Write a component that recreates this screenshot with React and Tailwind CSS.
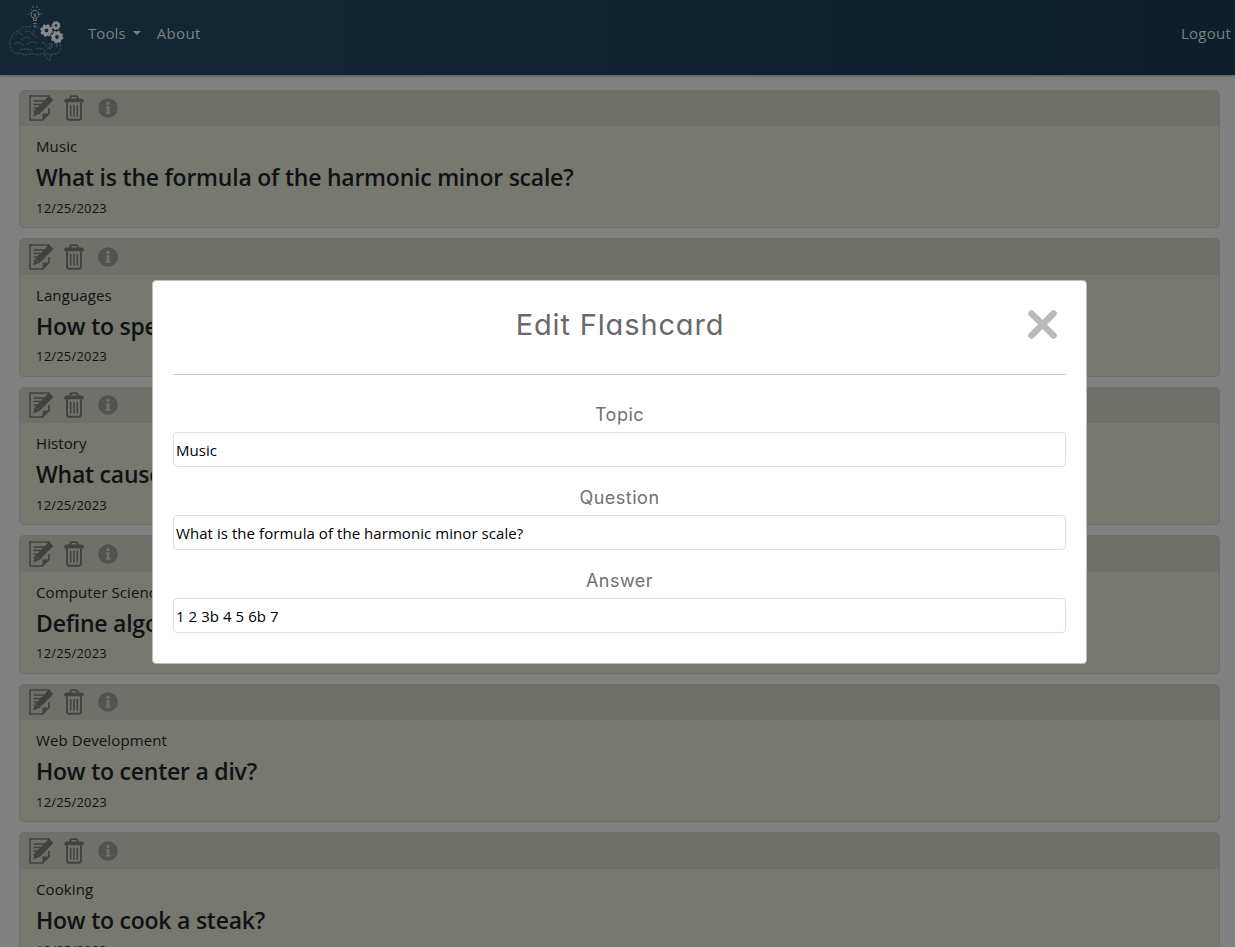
import React from "react";

const cards = [
  ["Music", "What is the formula of the harmonic minor scale?"],
  ["Languages", "How to speak a new language?"],
  ["History", "What caused World War I?"],
  ["Computer Science", "Define algorithm"],
  ["Web Development", "How to center a div?"],
  ["Cooking", "How to cook a steak?"],
];

const fields = [
  ["Topic", "Music"],
  ["Question", "What is the formula of the harmonic minor scale?"],
  ["Answer", "1 2 3b 4 5 6b 7"],
];

function Gear({ x, y, r }) {
  return (
    <g transform={`translate(${x} ${y})`} stroke="currentColor" fill="none">
      <circle r={r * 0.58} strokeWidth={r * 0.56} />
      <circle r={r * 0.88} strokeWidth={r * 0.25} strokeDasharray={`${r * 0.36} ${r * 0.331}`} />
    </g>
  );
}

function Logo() {
  return (
    <svg className="h-[66px] w-[72px] shrink-0 text-[#85898c]" viewBox="0 0 72 66" fill="none" stroke="currentColor">
      <g strokeWidth=".9" strokeLinecap="round" stroke="#737c82">
        <circle cx="35" cy="14.300" r="4" />
        <path d="M33.500 18.500v2h3v-2M34 14l1 3 1-3M28.500 14h.5M41 14h.5M30.500 9l.7.700M39.500 9l-.7.700M33 6.500v1M37 6.500v1" />
      </g>
      <path d="M33.500 23.500h3M35 25v3" strokeWidth="1" stroke="#68757e" />
      <g stroke="#435560" strokeWidth=".8" strokeDasharray="3 .8">
        <path d="M39 28c-4-3-8-2-10-1-5-1-9 1-10 4-5 0-7 4-7 7-3 3-3 7-1 10 0 4 5 6 9 5 4 3 9 2 12 0 3 3 8 2 11 0l5 1c5 1 11 0 12-4 2-5-1-8-4-9" />
        <path d="M16 34c3-2 6-1 7 2M21 40c4-3 7-4 10-1M14 44c4-3 8-1 9 2M27 45c3-4 8-4 11-1M25 32c4-2 6 0 8 3M34 30c-2 4 1 6 4 8M42 42c3 1 5 3 4 6M49 43c2 3 0 5-2 6M20 50c5-2 8-1 12 0M36 49c4-2 7 0 10 2M44 54c1 3 3 5 6 6l1-5" />
      </g>
      <path d="M52 43v4l-3 2M57 42v5" stroke="#56656f" strokeWidth=".8" />
      <Gear x={46.500} y={30.500} r={6.3} />
      <Gear x={56} y={25.500} r={4.500} />
      <Gear x={57} y={37} r={6.3} />
    </svg>
  );
}

function EditIcon() {
  return (
    <svg className="h-[26px] w-[25px]" viewBox="0 0 25 26" fill="none">
      <path d="M20 5V1H1v24h12.500L20 18.500V13" stroke="#414141" strokeWidth="1.600" />
      <path d="M13.500 25v-6.500H20z" fill="#414141" />
      <path d="M4.500 6h11M4.500 9.500h8M4.500 13h5M4.500 16.500h3" stroke="#414141" strokeWidth="1.400" />
      <path d="M20 .8l4.400 4.100L10.800 18.700 4 21.400 6.500 14.500z" fill="#414141" />
      <path d="M7.300 15.700l2.200 2.200" stroke="#6c6d66" strokeWidth=".7" />
    </svg>
  );
}

function TrashIcon() {
  return (
    <svg className="h-[26px] w-[20px]" viewBox="0 0 20 26" fill="none" stroke="#424242" strokeLinecap="round">
      <path d="M6.300 4V3Q6.300 1.100 8 1.100h4q1.700 0 1.700 1.900v1" strokeWidth="1.900" />
      <path d="M1.200 6.300v-.5q0-1.300 1.300-1.300h15q1.300 0 1.300 1.300v.5z" strokeWidth="1.900" fill="#424242" />
      <path d="M3 8v14.500q0 2.300 2.300 2.300h9.400q2.300 0 2.300-2.300V8" strokeWidth="1.900" />
      <path d="M6.700 10.500v10.500M10 10.500v10.500M13.300 10.500v10.500" strokeWidth="1.500" />
    </svg>
  );
}

function InfoIcon() {
  return (
    <svg className="size-5" viewBox="0 0 20 20">
      <circle cx="10" cy="10" r="9.800" fill="#525252" />
      <circle cx="10" cy="5.400" r="1.700" fill="#70716a" />
      <path d="M8 8.300h3.500v5.700h1v1.800H7.800V14h1v-3.900H8z" fill="#70716a" />
    </svg>
  );
}

function Card({ topic, question }) {
  return (
    <article className="h-[138.3px] shrink-0 overflow-hidden rounded-[5px] border border-[#6d6e6b] bg-[#777870]">
      <div className="flex h-[35.3px] items-center bg-[#6f7069] pb-[0.6px] pl-[9px]">
        <EditIcon />
        <span className="ml-[10px] flex"><TrashIcon /></span>
        <span className="ml-[14px] flex"><InfoIcon /></span>
      </div>
      <div className="flex flex-col pl-4 pt-2 text-[#101214]">
        <p className="h-6 whitespace-nowrap text-[15px] leading-6 tracking-[0.1px]">{topic}</p>
        <h2 className="mt-[5px] h-[29px] whitespace-nowrap text-[23px] font-semibold leading-[29px] tracking-[-0.23px]">{question}</h2>
        <p className="mt-[5.5px] h-[21px] text-[13px] leading-[21px] tracking-[0.2px]">12/25/2023</p>
      </div>
    </article>
  );
}

export default function App() {
  return (
    <div className="relative h-[947px] w-[1235px] overflow-hidden bg-[#808080] font-['Open_Sans','Noto_Sans',sans-serif]">
      <header className="flex h-[75px] items-start bg-linear-to-r from-[#132735] to-[#0c1f2b] shadow-[0_1px_3px_rgba(0,0,0,0.3)]">
        <Logo />
        <nav className="flex flex-1 items-center pl-4 pr-1 pt-[21px] text-[15px] leading-6 tracking-[0.1px] text-[#788184]">
          <span>Tools</span>
          <span className="ml-[7px] border-x-[4.5px] border-t-[4.5px] border-x-transparent border-t-[#788184]" />
          <span className="ml-4 tracking-[0.35px]">About</span>
          <span className="ml-auto tracking-[0.25px]">Logout</span>
        </nav>
      </header>
      <main className="flex flex-col gap-[10.2px] pl-[19px] pr-[15px] pt-[14.9px]">
        {cards.map(([topic, question]) => (
          <Card key={topic} topic={topic} question={question} />
        ))}
      </main>
      <section role="dialog" className="absolute left-[152px] top-[280px] h-[384px] w-[935px] rounded-[4px] border border-[#bdbdbd] bg-white px-5">
        <div className="flex h-[94px] items-start justify-end border-b border-[#cccccc]">
          <h1 className="flex-1 pl-[40px] pt-[24px] text-center font-['Inter',sans-serif] text-[29px] font-normal leading-10 tracking-[0.85px] text-[#696969] [font-feature-settings:'cv11']">Edit Flashcard</h1>
          <svg className="mr-[8px] mt-[28px] size-[31px]" viewBox="0 0 31 31">
            <path d="M4.500 4.500l22 22M26.500 4.500l-22 22" stroke="#bababa" strokeWidth="6.500" strokeLinecap="round" />
          </svg>
        </div>
        <form className="flex flex-col pt-[28px]">
          {fields.map(([label, value]) => (
            <label key={label} className="flex h-[83px] flex-col">
              <span className="h-[29px] text-center font-['Inter',sans-serif] text-[18px] font-normal leading-6 tracking-[0.5px] text-[#717171]">{label}</span>
              <input readOnly value={value} className="h-[35px] w-full rounded-[4px] border border-[#dedede] bg-white px-[2px] text-[15px] tracking-[0.06px] text-black outline-none" />
            </label>
          ))}
        </form>
      </section>
    </div>
  );
}
